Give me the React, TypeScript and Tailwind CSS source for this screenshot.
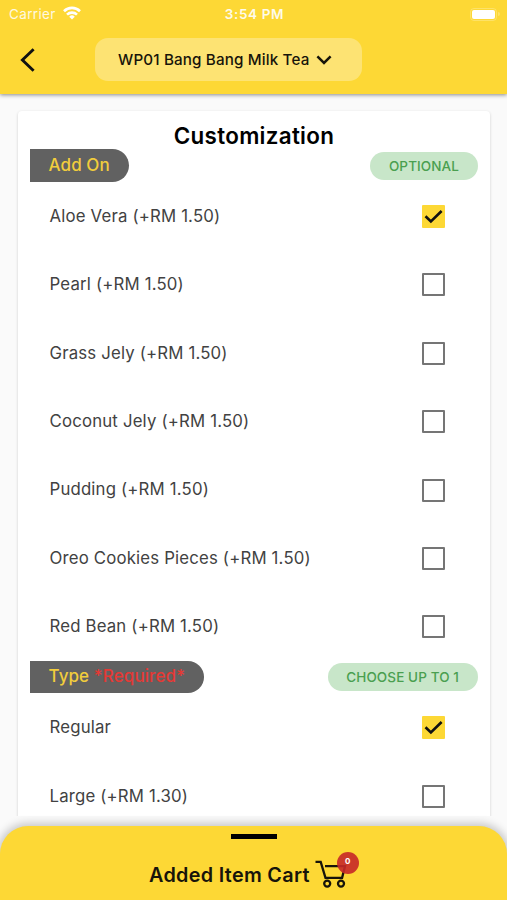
import { clsx } from "clsx"

interface Option {
    label: string
    checked?: boolean
}

interface Group {
    title: string
    required?: boolean
    hint: string
    options: Option[]
}

const groups: Group[] = [
    {
        title: "Add On",
        hint: "OPTIONAL",
        options: [
            { label: "Aloe Vera (+RM 1.50)", checked: true },
            { label: "Pearl (+RM 1.50)" },
            { label: "Grass Jely (+RM 1.50)" },
            { label: "Coconut Jely (+RM 1.50)" },
            { label: "Pudding (+RM 1.50)" },
            { label: "Oreo Cookies Pieces (+RM 1.50)" },
            { label: "Red Bean (+RM 1.50)" },
        ],
    },
    {
        title: "Type",
        required: true,
        hint: "CHOOSE UP TO 1",
        options: [
            { label: "Regular", checked: true },
            { label: "Large (+RM 1.30)" },
        ],
    },
]

function StatusBar() {
    return (
        <div className="grid h-[28px] grid-cols-3 items-center pr-[7px] pl-[9px] text-[13.5px] text-white">
            <div className="flex items-center gap-[7px]">
                <span className="tracking-[0.35px] opacity-85">Carrier</span>
                <svg viewBox="0 0 18 14" className="-mt-0.5 h-[14px] w-[18px]" fill="none" stroke="currentColor" strokeWidth="2.6">
                    <path d="M1 5.2a11.4 11.4 0 0 1 16 0" />
                    <path d="M4 8.6a7.2 7.2 0 0 1 10 0" />
                    <path d="M9 13.6 6.2 10.7a4 4 0 0 1 5.6 0Z" fill="currentColor" stroke="none" />
                </svg>
            </div>
            <span className="text-center font-semibold tracking-[0.65px] whitespace-nowrap opacity-90">3:54 PM</span>
            <div className="flex items-center justify-end gap-px">
                <span className="h-[13px] w-[27px] rounded-[4px] border border-white/25 p-px">
                    <span className="block h-full rounded-[2px] bg-white" />
                </span>
                <span className="h-1 w-[2px] rounded-r bg-white/25" />
            </div>
        </div>
    )
}

function Header() {
    return (
        <header className="relative z-10 h-[94px] shrink-0 bg-[#fdd835] shadow-[0_1px_4px_rgba(0,0,0,0.45)]">
            <StatusBar />
            <div className="flex items-start pt-[10px] pl-[20px]">
                <svg viewBox="0 0 16 24" className="mt-[10px] h-6 w-4 shrink-0" fill="none" stroke="#111" strokeWidth="2.9">
                    <path d="M13.6 1.2 2.4 12l11.2 10.8" />
                </svg>
                <button className="ml-[59px] flex h-[43px] w-[267px] items-center rounded-[13px] bg-[#fde373] pl-[23px] text-[15.2px] font-medium text-[#17140a]">
                    <span className="pt-px tracking-[0.15px] whitespace-nowrap">WP01 Bang Bang Milk Tea</span>
                    <svg viewBox="0 0 16 10" className="ml-[7px] h-[10px] w-4" fill="none" stroke="currentColor" strokeWidth="2.5">
                        <path d="m1.4 1.4 6.6 6.6 6.6-6.6" />
                    </svg>
                </button>
            </div>
        </header>
    )
}

function CheckMark({ checked }: { checked?: boolean }) {
    return (
        <span
            className={clsx(
                "flex size-[23px] shrink-0 items-center justify-center rounded-[1px]",
                checked ? "bg-[#fdd835]" : "border-2 border-[#757575]"
            )}
        >
            {checked && (
                <svg viewBox="0 0 23 23" className="size-[23px]" fill="none" stroke="#111" strokeWidth="2.6">
                    <path d="m3.5 11.2 5.4 5.2L19.6 6" />
                </svg>
            )}
        </span>
    )
}

function OptionGroup({ group }: { group: Group }) {
    return (
        <section>
            <div className="flex h-[32.7px] items-center justify-between pr-[12.5px] pl-[11.5px]">
                <h2 className="flex h-full items-center rounded-r-full bg-[#616161] px-[19px] text-[17px] font-medium tracking-[0.1px] whitespace-pre text-[#f2cd3c]">
                    {group.title}
                    {group.required && <span className="text-[#e53935]"> *Required*</span>}
                </h2>
                <span className="flex h-7 items-center rounded-full bg-[#c8e6c9] px-[18.5px] text-[13.5px] font-medium tracking-[0.1px] text-[#4a9f50]">
                    {group.hint}
                </span>
            </div>
            {group.options.map((option) => (
                <div key={option.label} className="flex h-[68.4px] items-center justify-between pt-[0.6px] pr-[45px] pl-[31.5px]">
                    <span className="text-[16.8px] tracking-[0.17px] text-[#424242]">{option.label}</span>
                    <CheckMark checked={option.checked} />
                </div>
            ))}
        </section>
    )
}

function CartSheet() {
    return (
        <footer className="relative h-[74px] shrink-0 rounded-t-[28px] bg-[#fdd835] pt-2 shadow-[0_0_9px_3px_rgba(0,0,0,0.2)]">
            <div className="mx-auto h-[5px] w-[46px] bg-black" />
            <div className="flex items-start pt-[20px] pl-[149px]">
                <span className="text-[19.8px] leading-[32px] font-semibold tracking-[0.32px] whitespace-nowrap text-[#17140a]">Added Item Cart</span>
                <div className="relative ml-[5px]">
                    <svg viewBox="0 0 32 28" className="mt-[1px] h-7 w-8" fill="none" stroke="#17140a" strokeWidth="2.3">
                        <path d="M.5 1.8h5.2l4.8 16h16.6L30 6.2H10" />
                        <circle cx="12.2" cy="23.6" r="3" />
                        <circle cx="26" cy="23.6" r="3" />
                    </svg>
                    <span className="absolute -top-[7px] left-[22px] flex size-[22px] items-center justify-center rounded-full bg-[#c62828]/90 pb-[4px] text-[8px] font-bold text-white">
                        0
                    </span>
                </div>
            </div>
        </footer>
    )
}

export default function App() {
    return (
        <div className="flex h-[900px] w-[507px] flex-col overflow-hidden bg-[#fafafa] font-['Inter',sans-serif]">
            <Header />
            <main className="mb-[10px] min-h-0 flex-1 overflow-hidden px-[18px] pt-[17px]">
                <div className="mr-[-1px] rounded-[4px] bg-white shadow-[0_1px_3px_rgba(0,0,0,0.18)]">
                    <h1 className="pt-[12.3px] text-center text-[22.4px] leading-[26px] font-semibold tracking-[0.3px] text-black">Customization</h1>
                    {groups.map((group) => (
                        <OptionGroup key={group.title} group={group} />
                    ))}
                </div>
            </main>
            <CartSheet />
        </div>
    )
}
